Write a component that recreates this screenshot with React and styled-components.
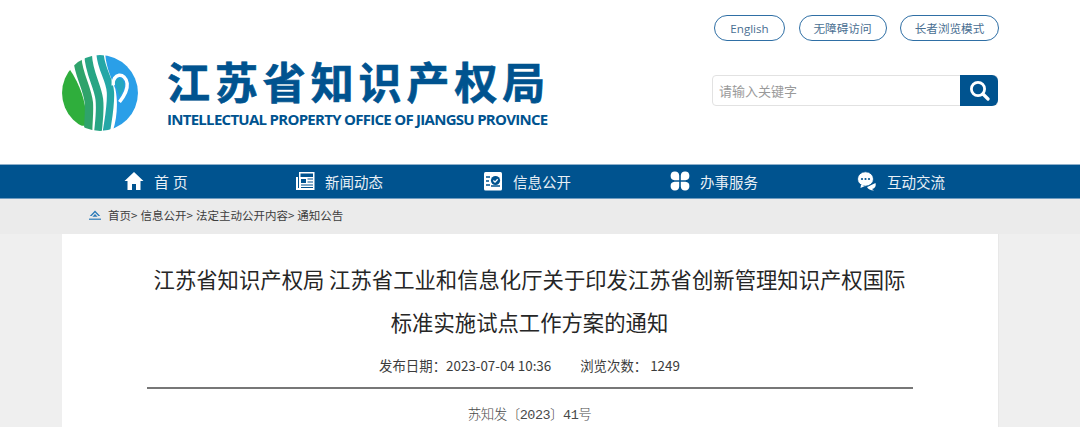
import React from "react";
import styled, { createGlobalStyle } from "styled-components";

const Global = createGlobalStyle`
  html, body { margin: 0; padding: 0; background: #efefef; overflow: hidden; }
  body { font-family: "Noto Sans CJK SC", "Liberation Sans", sans-serif; }
`;
const Page = styled.div`width: 1080px; height: 427px; overflow: hidden;`;
const Header = styled.header`
  height: 164px; background: #fff; display: flex; justify-content: space-between;
  box-sizing: border-box; padding: 15px 81px 0 61px;
`;
const Brand = styled.div`display: flex; align-items: flex-start; padding-top: 39px; gap: 28px;`;
const BrandText = styled.div`display: flex; flex-direction: column; margin-top: -3px;`;
const BrandCn = styled.div`
  font-size: 43px; line-height: 58px; font-weight: 700; color: #00538f; letter-spacing: 4.9px; white-space: nowrap;
  -webkit-text-stroke: 0.7px #00538f;
`;
const BrandEn = styled.div`
  font-family: "Open Sans", sans-serif; font-size: 15px; line-height: 20px; font-weight: 700; color: #00538f;
  letter-spacing: -0.72px; white-space: nowrap;
`;
const Tools = styled.div`display: flex; flex-direction: column; align-items: flex-end;`;
const Pills = styled.div`display: flex; gap: 13.5px;`;
const Pill = styled.a`
  box-sizing: border-box; height: 26px; width: ${p => p.$w}px; border: 1px solid #2f6fa5; border-radius: 13px;
  display: flex; align-items: center; justify-content: center; font-size: 11.6px; color: #4a6f92; background: #fff;
  font-family: "Open Sans", "Noto Sans CJK SC", sans-serif;
`;
const Search = styled.div`
  margin: 34px 1px 0 0; width: 286px; height: 31px; box-sizing: border-box; display: flex;
  border: 1px solid #e2e2e2; border-radius: 4px;
`;
const SearchText = styled.div`flex: 1; font-size: 13px; color: #9a9a9a; padding-left: 6px; line-height: 29px;`;
const SearchBtn = styled.div`
  width: 38px; background: #00538f; display: flex; align-items: center; justify-content: center; margin: -1px -1px -1px 0;
  border-radius: 0 6px 6px 0;
`;
const Nav = styled.nav`
  height: 35px; box-sizing: border-box; background: #00538f; border-top: 1px solid #8fb0cb; border-bottom: 1px solid #6f9cc0;
  display: flex; padding: 0 0 1px 124px; align-items: center;
`;
const NavItem = styled.a`
  display: flex; align-items: center; gap: ${p => p.$gap}px; width: ${p => p.$w}px; color: #e9f0f6; font-size: 14.5px; white-space: nowrap;
`;
const HomeLabel = styled.span`font-size: 15px; letter-spacing: 0.2px;`;
const Crumbs = styled.div`
  height: 35px; background: #ebebeb; display: flex; align-items: center; padding: 0 0 3px 89px; gap: 6px; box-sizing: border-box;
  font-size: 11.5px; color: #3d3d3d; white-space: nowrap; word-spacing: 0.5px;
`;
const CrumbText = styled.span`margin-left: 1px;`;
const Card = styled.main`
  margin: 0 82px 0 62px; background: #fff; height: 200px; box-sizing: border-box; padding: 23px 85px 0 84px;
  text-align: center; box-shadow: 1px 0 0 #e8e8e8;
`;
const Title = styled.h1`
  margin: 0; font-size: 21.35px; font-weight: 400; line-height: 43px; color: #262626; white-space: nowrap;
`;
const Meta = styled.div`
  margin-top: 12px; font-size: 13.4px; line-height: 20px; color: #3c3c3c; display: flex; justify-content: center; gap: 29px;
`;
const Rule = styled.hr`margin: 12px 0 0 1px; border: 0; height: 2px; background: #777;`;
const DocNo = styled.div`
  margin-top: 17px; font-size: 13.5px; line-height: 20px; color: #4a4a4a; font-weight: 300; letter-spacing: -0.5px;
  font-family: "Liberation Mono", "Noto Sans CJK SC", monospace;
`;

const Logo = () => (
  <svg width="78" height="78" viewBox="0 0 224 224">
    <defs><clipPath id="logoClip"><circle cx="112" cy="112" r="109" /></clipPath></defs>
    <g clipPath="url(#logoClip)">
      <rect width="224" height="224" fill="#fff" />
      <path d="M127 0C130 40 145 70 156 100C165 140 160 190 148 224H224V0Z" fill="#2a9fe8" />
      <path d="M24 42C62 100 76 150 70 206L0 206V42Z" fill="#2fae3c" />
      <path d="M47 12C50 60 75 95 80 140C82 170 78 195 78 224" stroke="#2fa36b" strokeWidth="24" fill="none" />
      <path d="M78 0C78 50 105 90 110 130C114 165 108 200 106 226" stroke="#28a584" strokeWidth="22" fill="none" />
      <path d="M112 -5C112 40 140 70 142 110C144 150 135 190 130 226" stroke="#25a7a6" strokeWidth="21" fill="none" />
      <path d="M150 90C146 55 185 50 190 85C192 105 178 125 168 138" stroke="#fff" strokeWidth="10" fill="none" />
      <path d="M155 85C155 65 180 65 182 85C183 100 175 112 168 122C165 110 160 100 155 85Z" fill="#25a7c0" />
    </g>
  </svg>
);
const Mag = () => (
  <svg width="21" height="21" viewBox="0 0 21 21" fill="none" stroke="#fff">
    <circle cx="9" cy="9" r="6.6" strokeWidth="2.8" />
    <path d="M14 14l5 5" strokeWidth="3.2" strokeLinecap="round" />
  </svg>
);
const HomeIcon = () => (
  <svg width="20" height="20" viewBox="0 0 20 20" fill="#fff">
    <path d="M10 1L0.5 10H3.5V19H8V13H12V19H16.5V10H19.5Z" />
  </svg>
);
const NewsIcon = () => (
  <svg width="20" height="20" viewBox="0 0 20 20">
    <path d="M4 1H19.5V19H1V6H3V17H4Z" fill="#fff" />
    <rect x="5.5" y="2.5" width="12.5" height="3.5" fill="#00538f" />
    <rect x="6" y="8" width="5" height="4" fill="#00538f" />
    <path d="M12.5 8H18M12.5 11H18M6 14H18M6 16.5H18" stroke="#00538f" strokeWidth="1.2" />
  </svg>
);
const InfoIcon = () => (
  <svg width="20" height="20" viewBox="0 0 20 20">
    <rect x="1" y="1" width="18" height="18.5" rx="1.5" fill="#fff" />
    <path d="M3 6H7M3 10H6M3 14H7" stroke="#00538f" strokeWidth="1.5" />
    <circle cx="12.5" cy="9.5" r="4.6" fill="#00538f" />
    <path d="M10.4 9.5l1.6 1.6 2.7-2.9" stroke="#fff" strokeWidth="1.3" fill="none" />
    <path d="M8 15H17" stroke="#00538f" strokeWidth="1.5" />
  </svg>
);
const ServiceIcon = () => (
  <svg width="20" height="20" viewBox="0 0 20 20" fill="#fff">
    <path d="M9.2 9.2H4.6A4.3 4.3 0 1 1 9.2 4.6Z" />
    <path d="M10.8 9.2H15.4A4.3 4.3 0 1 0 10.8 4.6Z" />
    <path d="M9.2 10.8H4.6A4.3 4.3 0 1 0 9.2 15.4Z" />
    <path d="M10.8 10.8H15.4A4.3 4.3 0 1 1 10.8 15.4Z" />
  </svg>
);
const ChatIcon = () => (
  <svg width="20" height="20" viewBox="0 0 20 20">
    <path d="M18.5 12C19.5 16 17 17.5 15 18L17 19.5C13.5 19.5 11 18 10 16Z" fill="#fff" />
    <ellipse cx="8.5" cy="8" rx="8" ry="7.2" fill="#fff" stroke="#00538f" strokeWidth="0.8" />
    <path d="M4 13.5L3.5 17L8 15Z" fill="#fff" />
    <circle cx="5" cy="8" r="1.1" fill="#00538f" /><circle cx="8.5" cy="8" r="1.1" fill="#00538f" /><circle cx="12" cy="8" r="1.1" fill="#00538f" />
  </svg>
);
const CrumbHome = () => (
  <svg width="12" height="10" viewBox="0 0 12 10">
    <path d="M6 0.5L0.8 6H2.6L6 2.6L9.4 6H11.2Z" fill="#2a7ab8" />
    <path d="M6 4L3.4 6.8H8.6Z" fill="#2a7ab8" />
    <path d="M0 9.2H12" stroke="#2a7ab8" strokeWidth="1.2" />
  </svg>
);

const navItems = [
  { label: <HomeLabel>首 页</HomeLabel>, key: "home", icon: <HomeIcon />, w: 171, gap: 10 },
  { label: "新闻动态", key: "news", icon: <NewsIcon />, w: 188, gap: 10 },
  { label: "信息公开", key: "info", icon: <InfoIcon />, w: 187, gap: 10 },
  { label: "办事服务", key: "svc", icon: <ServiceIcon />, w: 187, gap: 10 },
  { label: "互动交流", key: "chat", icon: <ChatIcon />, w: 120, gap: 10 },
];

export default function App() {
  return (
    <Page>
      <Global />
      <Header>
        <Brand>
          <Logo />
          <BrandText>
            <BrandCn>江苏省知识产权局</BrandCn>
            <BrandEn>INTELLECTUAL PROPERTY OFFICE OF JIANGSU PROVINCE</BrandEn>
          </BrandText>
        </Brand>
        <Tools>
          <Pills>
            <Pill $w={71}>English</Pill>
            <Pill $w={88}>无障碍访问</Pill>
            <Pill $w={99}>长者浏览模式</Pill>
          </Pills>
          <Search>
            <SearchText>请输入关键字</SearchText>
            <SearchBtn><Mag /></SearchBtn>
          </Search>
        </Tools>
      </Header>
      <Nav>
        {navItems.map(n => (
          <NavItem key={n.key} $w={n.w} $gap={n.gap}>{n.icon}{n.label}</NavItem>
        ))}
      </Nav>
      <Crumbs>
        <CrumbHome />
        <CrumbText>首页&gt; 信息公开&gt; 法定主动公开内容&gt; 通知公告</CrumbText>
      </Crumbs>
      <Card>
        <Title>江苏省知识产权局 江苏省工业和信息化厅关于印发江苏省创新管理知识产权国际<br />标准实施试点工作方案的通知</Title>
        <Meta><span>发布日期：2023-07-04 10:36</span><span>浏览次数： 1249</span></Meta>
        <Rule />
        <DocNo>苏知发〔2023〕41号</DocNo>
      </Card>
    </Page>
  );
}
